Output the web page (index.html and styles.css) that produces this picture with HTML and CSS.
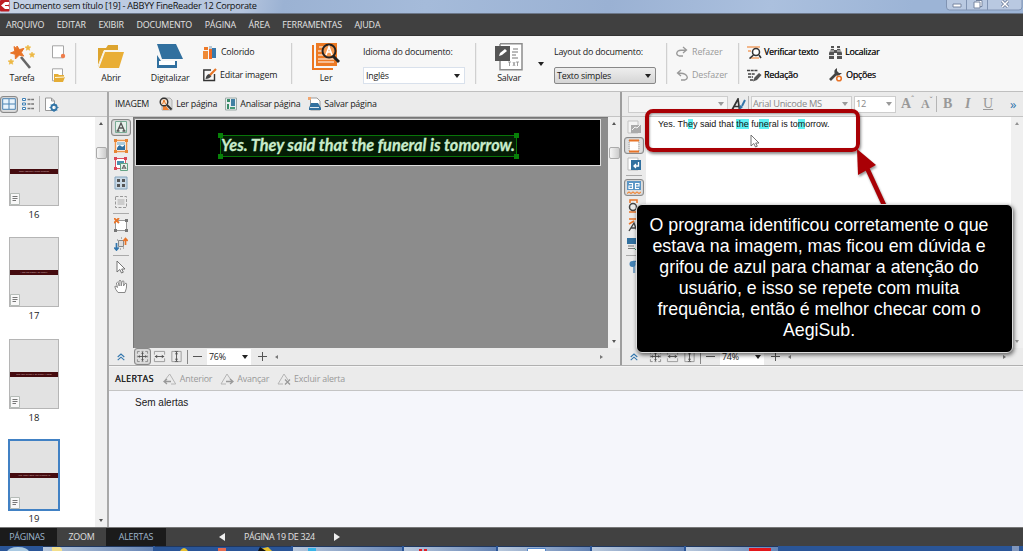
FILE: index.html
```html
<!DOCTYPE html>
<html lang="pt">
<head>
<meta charset="utf-8">
<title>ABBYY FineReader 12 Corporate</title>
<link rel="stylesheet" href="styles.css">
</head>
<body>
<svg class="defs" width="0" height="0">
  <symbol id="pageglass" viewBox="0 0 14 14"><path d="M3 1h8l2 2v10H3z" fill="#ddd" stroke="#999" stroke-width=".7"/><path d="M4 9h3l3 4H4z" fill="#f08030"/><circle cx="5" cy="5" r="3.8" fill="#f7e2cf" stroke="#333" stroke-width="1.4"/><path d="M3.6 7 5 3l1.5 4" stroke="#e87722" fill="none"/><path d="m8 8 4.500 4.500" stroke="#333" stroke-width="2"/></symbol>
  <symbol id="a-tri" viewBox="0 0 14 12"><path d="M2 7 6.700 1l6 10H8" fill="none" stroke="#b5b5b5"/></symbol>
  <symbol id="dbl" viewBox="0 0 8 8"><path d="m.7 4 3.300-3 3.300 3m-6.600 3.200L4 4.200l3.300 3" fill="none" stroke="#3276ad" stroke-width="1.100"/></symbol>
  <symbol id="fit" viewBox="0 0 14 14"><path d="M1.500 4V1.500H4m2 0h2m2 0h2.500V4m0 2v2m0 2v2.500H10m-2 0H6m-2 0H1.500V10m0-2V6" fill="none" stroke="#888"/><path d="M7 3v8M3 7h8" stroke="#555"/><path d="m5.500 4 1.500-2 1.500 2zm0 6L7 12l1.500-2zM4 5.500 2 7l2 1.500zm6 0L12 7l-2 1.500z" fill="#555"/></symbol>
  <symbol id="fitw" viewBox="0 0 14 14"><path d="M1.500 5V1.500h11V5m0 4v3.500h-11V9" fill="none" stroke="#999"/><path d="M2 7h10" stroke="#555"/><path d="M4.500 5 2 7l2.500 2zm5 0L12 7 9.500 9z" fill="#555"/></symbol>
  <symbol id="fith" viewBox="0 0 14 14"><path d="M5 1.500H2v11h3m4-11h3v11H9" fill="none" stroke="#999"/><path d="M7 2v10M5 1.500h4m-4 11h4" stroke="#555"/><path d="M5.400 4.500 7 2l1.600 2.500zm0 5L7 12l1.600-2.500z" fill="#555"/></symbol>
  <symbol id="note" viewBox="0 0 10 12"><path d="M.5.500h9v11h-9z" fill="#f8f8f8" stroke="#b5bbb7"/><path d="M2.500 3.500h5m-5 2h5m-5 2H6" stroke="#777"/></symbol>
  <symbol id="cursor" viewBox="0 0 10 14"><path d="M1 1v11l2.800-2.500L5.500 13l1.800-.8L5.700 9H9z" fill="#fff" stroke="#666" stroke-width=".9"/></symbol>
</svg>

<header class="title"><svg width="10" height="12" viewBox="0 0 10 12"><rect width="9.500" height="11.500" rx="1" fill="#bd1d23"/><path d="M9 2H5L1 5.500 5 9h4V6.500L6.500 5.500 9 4.500z" fill="#fff"/><path d="M5 5.500h4" stroke="#bd1d23"/></svg><span>Documento sem título [19] - ABBYY FineReader 12 Corporate</span>
  <svg class="winbtns" width="79" height="12" viewBox="0 0 79 12"><path d="M.5 0v7q0 3 3 3H73q3 0 3-3V0M20.500 0v10M41.500 0v10" fill="#b9c9e1" stroke="#8093b2"/><path d="M7 4h8v3H7zM28 2h6v6h-6zM30 .5h6v6h-2" fill="#fff" stroke="#7685a0"/><path d="m56 1 6 6m0-6-6 6" stroke="#687894" stroke-width="3"/><path d="m56 1 6 6m0-6-6 6" stroke="#fff" stroke-width="1.500"/></svg>
</header>
<nav class="menu"><span>ARQUIVO</span><span>EDITAR</span><span>EXIBIR</span><span>DOCUMENTO</span><span>PÁGINA</span><span>ÁREA</span><span>FERRAMENTAS</span><span>AJUDA</span></nav>

<section class="toolbar">
  <div class="big"><svg width="28" height="28" viewBox="0 0 28 28"><path d="m13 14 9 11" stroke="#666" stroke-width="2.600"/><path d="m9 3 2.400 3.600 4.500-1.200-2.600 4 2.400 3.700-4.400-1L7.400 16l-.2-4.700L2.500 10l4.300-1.700L6 3.500l2.500 2z" fill="#e87428" stroke="#e87428"/><path d="m20 2 .8 1.700 2 .2-1.500 1.400.4 2-1.700-1-1.700 1 .4-2L17 4l2-.2zM24 9l.9 1.700 2 .2-1.500 1.400.4 2-1.800-1-1.700 1 .4-2-1.500-1.400 2-.2zM3 16l.9 1.700 2 .2-1.500 1.400.4 2-1.800-1-1.700 1 .4-2L0 17.900l2-.2z" fill="#edb843" stroke="#edb843" stroke-width=".6"/></svg><span>Tarefa</span></div>
  <div class="icons2"><svg width="15" height="15" viewBox="0 0 15 15"><path d="M1.500.8h11v12h-11z" fill="#fff" stroke="#a5a5a5"/><circle cx="12" cy="11" r="2.200" fill="#ef7d4b"/></svg><svg width="15" height="15" viewBox="0 0 15 15"><path d="M1.500.8h10v12h-10z" fill="#fff" stroke="#a5a5a5"/><path d="M3 14V6h4l1 1h5v2h1l-2 5z" fill="#e5ad35"/><path d="m4 9.500 9.500-.5" stroke="#fff8df"/></svg></div>
  <i class="sep"></i>
  <div class="big abrir"><svg width="28" height="28" viewBox="0 0 28 28"><path d="M1 24V5h8l2-3h10v5H7z" fill="#dda42e"/><path d="M8 9h19l-5 16H2z" fill="#e9ae35"/><path d="M1 23 7 8h15V4" fill="none" stroke="#faf2dc"/></svg><span>Abrir</span></div>
  <div class="big digi"><svg width="28" height="28" viewBox="0 0 28 28"><path d="M1 1h19l7 15H6z" fill="#31709f"/><path d="M1 12v13h20v-7H5z" fill="#31709f"/><path d="M3 18h16v4H3z" fill="#fff"/></svg><span>Digitalizar</span></div>
  <div class="pair colors"><p><svg width="13" height="13" viewBox="0 0 13 13"><path d="M1 1h4v3H1z" fill="#ee7a28"/><path d="M0 5h5v8H0z" fill="#ef8935"/><path d="M6 3h3v10H6z" fill="#f06a25"/><path d="M9 2h4v10H9z" fill="#3879ac"/><path d="M6 0h3v3H6z" fill="#b6c8d6"/></svg>Colorido</p><p><svg width="14" height="14" viewBox="0 0 14 14"><path d="M11.500 6v6.500h-10.700V2H8" fill="none" stroke="#333" stroke-width="1.400"/><path d="M2.500 11q1-5 4-5l2 2q-2 3-6 3" fill="#444"/><path d="m7 7 6-6" stroke="#e87527" stroke-width="2.200"/></svg>Editar imagem</p></div>
  <i class="sep"></i>
  <div class="big ler"><svg width="28" height="28" viewBox="0 0 28 28"><path d="M1 2v24h20" fill="none" stroke="#ec7620" stroke-width="2"/><path d="M4 0h21v23H4z" fill="#ed7a24"/><path d="M7 4h7M6 8h6m-6 4h6m-6 4h16M6 19h16" stroke="#fff" stroke-width="1.200"/><circle cx="17" cy="8" r="6.500" fill="#f4984f" stroke="#222" stroke-width="2"/><path d="m14 12 3-8 3 8m-5-3h4" stroke="#fff" stroke-width="1.600" fill="none"/><path d="m21 13 6 6" stroke="#222" stroke-width="3"/></svg><span>Ler</span></div>
  <div class="choice idioma"><label>Idioma do documento:</label><b class="select">Inglês<i class="tri"></i></b></div>
  <i class="sep"></i>
  <div class="big salvar"><svg width="28" height="28" viewBox="0 0 28 28"><path d="M5 .8h22v26H5V18m0-15V1" fill="#fff" stroke="#8d8d8d" stroke-width="1.500"/><path d="M0 3h15v15H0z" fill="#555"/><path d="m4 13 1-3 5-4 2 2-5 4z" fill="#fff"/><path d="M18 6h5m-6 3h6m-6 3h4m-4 3h6" stroke="#777"/><path d="M13 19h3m-1.500 0v4m3.500-4 2 4m0-4-2 4m3-4h3m-1.500 0v4" stroke="#888" stroke-width=".8"/></svg><span>Salvar</span></div>
  <i class="tri loose"></i>
  <div class="choice layout"><label>Layout do documento:</label><b class="select gray">Texto simples<i class="tri"></i></b></div>
  <i class="sep"></i>
  <div class="pair undo"><p><svg width="12" height="12" viewBox="0 0 12 12"><path d="M3 10Q-1 8 2 5q2-1 8-1M7 1l3.500 3L7 7M3 10h4" fill="none" stroke="#999" stroke-width="1.300"/></svg>Refazer</p><p><svg width="12" height="12" viewBox="0 0 12 12"><path d="M9 11q4-2 1-5-2-2-8-2m3-3L1.500 4 5 7m4 4H5" fill="none" stroke="#999" stroke-width="1.300"/></svg>Desfazer</p></div>
  <i class="sep"></i>
  <div class="pair check"><p><svg width="15" height="13" viewBox="0 0 15 13"><path d="M0 1h13M1 5h3m-1 7h9" stroke="#f2a268" stroke-width="1.400"/><circle cx="9" cy="6" r="3.500" fill="#fff" stroke="#333" stroke-width="1.500"/><path d="m6.500 9-4 3.500M12 9l2 3" stroke="#333" stroke-width="1.600"/></svg>Verificar texto</p><p><svg width="15" height="13" viewBox="0 0 15 13"><path d="M0 1.500h11M1 5h7M1 8h5m-3 3h4" stroke="#444" stroke-width="1.500" stroke-dasharray="3 .7"/><path d="m6 12.500 1.500-4L12 4l2.500 2L10 11z" fill="#555"/></svg>Redação</p></div>
  <div class="pair find"><p><svg width="13" height="13" viewBox="0 0 13 13"><path d="M2 0h3v4h3V0h3v3l2 4v6H8V7H5v6H0V7l2-4z" fill="#555"/><path d="M0 9.500h5m3 0h5M2 2.500h3m3 0h3M1 5h4m3 0h4" stroke="#f6f6f6" stroke-width=".9"/></svg>Localizar</p><p><svg width="14" height="14" viewBox="0 0 14 14"><path d="m1 12 6-6" stroke="#444" stroke-width="2.600"/><path d="M8 0Q4 2 6 6t7-1l-3 0-2-2z" fill="#444"/><circle cx="10" cy="10.500" r="2.300" fill="#fff" stroke="#e87428" stroke-width="1.600"/></svg>Opções</p></div>
</section>

<main>
  <aside class="pages">
    <div class="bar"><span class="on"><svg width="14" height="12" viewBox="0 0 14 12"><path d="M.7.700h12.600v10.600H.7zM7 1v10M1 6h12" fill="#eaf4fc" stroke="#4a83b3"/></svg></span><svg width="13" height="12" viewBox="0 0 13 12"><path d="M.5.500h3v2h-3zm0 4.500h3v2h-3zm0 4.500h3v2h-3z" fill="#fff" stroke="#3f80b5"/><path d="M5.500 1.500H12M5.500 6H12m-6.500 4.500H12" stroke="#777" stroke-dasharray="3 .7" stroke-width="1.500"/></svg><i class="vline"></i><svg width="15" height="15" viewBox="0 0 15 15"><path d="M9.500 13.500h-8V1h6l3 3v3M7.500 1v3h3" fill="#fff" stroke="#999"/><circle cx="10" cy="10.500" r="2.700" fill="none" stroke="#3275a7" stroke-width="1.900"/><path d="M10 6v9M5.500 10.500h9M7 7.500l6 6m0-6-6 6" stroke="#3275a7" stroke-dasharray="1.300 6.400"/></svg></div>
    <div class="pagebody">
      <div class="list">
        <figure><div class="thumb"><s>They weren't even human</s><svg width="10" height="12"><use href="#note"/></svg></div><figcaption>16</figcaption></figure>
        <figure><div class="thumb"><s>I am so happy to finally</s><svg width="10" height="12"><use href="#note"/></svg></div><figcaption>17</figcaption></figure>
        <figure><div class="thumb"><s>Did you bring it or didn't I hear</s><svg width="10" height="12"><use href="#note"/></svg></div><figcaption>18</figcaption></figure>
        <figure><div class="thumb sel"><s>Yes. They said the funeral is</s><svg width="10" height="12"><use href="#note"/></svg></div><figcaption>19</figcaption></figure>
      </div>
      <div class="vscroll"><i class="up"></i><i class="grip"></i><i class="down"></i></div>
    </div>
  </aside>

  <div class="work">
    <div class="panes">
      <section class="image">
        <div class="bar cmds"><span>IMAGEM</span><svg width="14" height="14"><use href="#pageglass"/></svg><span>Ler página</span><svg width="12" height="14" viewBox="0 0 12 14"><path d="M.5 1h11v12H.5z" fill="#e9eef0" stroke="#9caaa7"/><path d="M2 2h3v3H2zM2 7h2v5H2z" fill="#398d68"/><path d="M6 2h4v7H6z" fill="#4180a3"/><path d="M5 10h5v2H5z" fill="#4a9b7a"/></svg><span>Analisar página</span><svg width="13" height="14" viewBox="0 0 13 14"><path d="M2.500 1H9l3 3v9H2.500z" fill="#fff" stroke="#999"/><path d="m3 6h7l3 5v2H1v-2z" fill="#31709f"/><path d="M0 0h3v3H0z" fill="#f2a56e"/><path d="M2 10.500h9" stroke="#dce8f0"/></svg><span>Salvar página</span></div>
        <div class="viewer">
          <div class="strip">
            <span class="on"><svg width="14" height="14" viewBox="0 0 14 14"><path d="M1.500 1.500h11v11h-11z" fill="#e5f0ea" stroke="#78ab94"/><path d="M3.500 11 7 3l3.500 8M5 8h4M2.500 11h3m3 0h3" fill="none" stroke="#555" stroke-width="1.300"/></svg></span>
            <svg width="14" height="14" viewBox="0 0 14 14"><path d="M1.500 1.500h11v11h-11z" fill="#fff" stroke="#ee954c" stroke-width="1.500"/><path d="M3 9q2-4 4-2t4-2v6H3z" fill="#31709f"/><path d="M3 3h8v3H3z" fill="#a9cadb"/><path d="M0 0h3v3H0zm11 0h3v3h-3zM0 11h3v3H0zm11 0h3v3h-3z" fill="#e68434"/></svg>
            <svg width="14" height="14" viewBox="0 0 14 14"><path d="M1.500 1.500h10v10h-10z" fill="#fff" stroke="#dd5163"/><path d="M3 4h7v4H3z" fill="#4b91ad"/><path d="M0 0h3v3H0zm10 0h3v3h-3zM0 10h3v3H0z" fill="#d94555"/><path d="M6.500 6.500h7v7h-7z" fill="#e6f1eb" stroke="#64a485"/><path d="m8 12 2-4 2 4m-3-1h2" stroke="#555" fill="none"/></svg>
            <svg width="14" height="14" viewBox="0 0 14 14"><path d="M1 1h12v12H1z" fill="#c9d9e6" stroke="#82a3bd"/><path d="M3 3h3v3H3zm5 0h3v3H8zM3 8h3v3H3zm5 0h3v3H8z" fill="#555"/></svg>
            <svg width="14" height="14" viewBox="0 0 14 14"><path d="M1.500 1.500h11v11h-11z" fill="none" stroke="#999" stroke-dasharray="3 1.500"/><path d="M3.500 4h7v6h-7z" fill="#ccc"/></svg>
            <hr>
            <svg width="14" height="14" viewBox="0 0 14 14"><path d="M1.500 2.500h11v10h-11z" fill="#fff" stroke="#999"/><path d="M11 1h3v3h-3zM0 11h3v3H0zm11 0h3v3h-3z" fill="#777"/><path d="m0 0 5 5m0-5L0 5" stroke="#e87428" stroke-width="1.800"/></svg>
            <svg width="14" height="14" viewBox="0 0 14 14"><path d="M4.500 3.500h5v6h-5z" fill="#ddd" stroke="#888"/><path d="M2.500 6v7M.3 10.500l2.200 2.500 2.200-2.500" fill="none" stroke="#3276ad" stroke-width="1.700"/><path d="M11.500 8V1.500M9.300 4l2.200-2.500L13.700 4" fill="none" stroke="#e87428" stroke-width="1.700"/><path d="M6 12h1m2-1h1M3 3h1m3-2h1" stroke="#777"/></svg>
            <hr>
            <svg width="10" height="14"><use href="#cursor"/></svg>
            <svg width="14" height="15" viewBox="0 0 14 15"><path d="M4 13.500Q1 10 .8 7.500q1-1 2.700 1L2.400 4q1-1.500 2 0l.8 3L5 2q1-1.500 2 0l.2 5L8 2.500q1-1.300 2 0L9.500 7 11 4.500q1.500-.8 1.600.5Q13 9 11 13.500z" fill="#fff" stroke="#888"/></svg>
          </div>
          <div class="canvas"><div class="sheet"><svg width="301" height="26" viewBox="0 0 301 26"><path d="M2.500 2.500h296v21h-296z" fill="#041c05" stroke="#087509"/><path d="M0 0h5v5H0zm296 0h5v5h-5zM0 21h5v5H0zm296 0h5v5h-5z" fill="#078108"/><text x="3" y="18" class="scan" textLength="294" lengthAdjust="spacingAndGlyphs">Yes. They said that the funeral is tomorrow.</text></svg></div></div>
          <div class="vscroll"><i class="up"></i><i class="grip"></i><i class="down"></i></div>
        </div>
        <div class="zoom"><svg width="8" height="8"><use href="#dbl"/></svg><span class="on"><svg width="13" height="13"><use href="#fit"/></svg></span><svg width="13" height="13"><use href="#fitw"/></svg><svg width="13" height="13"><use href="#fith"/></svg><i class="vline"></i><i class="minus"></i><b>76%<i class="tri"></i></b><i class="plus"></i><em class="lt"></em><em class="gt"></em></div>
      </section>

      <section class="text">
        <div class="bar fmt"><b class="box w1"><i class="tri"></i></b><svg width="15" height="13" viewBox="0 0 15 13"><path d="m1 12 6-11 1.500 11M3.500 8.500h5" stroke="#333" stroke-width="1.700" fill="none"/><path d="m11 8 3-6" stroke="#3275a8" stroke-width="2"/><path d="m9 7 3 2-4 3.500z" fill="#3275a8"/></svg><i class="vline"></i><b class="box w2">Arial Unicode MS<i class="tri"></i></b><b class="box w3">12<i class="tri"></i></b><span class="sf a1">A<sup>ˆ</sup></span><span class="sf a2">A<sup>ˇ</sup></span><i class="vline"></i><span class="sf bb">B</span><span class="sf ii">I</span><span class="sf uu">U</span><span class="more">»</span></div>
        <div class="viewer">
          <div class="strip rstrip">
            <svg width="14" height="14" viewBox="0 0 14 14"><path d="M1 1h10v12H1z" fill="#f4f4f4" stroke="#c3c3c3"/><path d="M4 5h10v8H4z" fill="#aaa"/><path d="m5 10 3-3 2 1 3-3" stroke="#f4f4f4" fill="none"/></svg>
            <span class="on"><svg width="12" height="14" viewBox="0 0 12 14"><path d="M1 1v12M11 1v12" stroke="#aaa" stroke-dasharray="1 1"/><path d="M2 2h8v10H2z" fill="#fff"/><path d="M1 1.500h10M1 12.500h10" stroke="#e87428" stroke-width="2"/></svg></span>
            <svg width="14" height="14" viewBox="0 0 14 14"><path d="M1 1h10v12H1z" fill="#fff" stroke="#bbb"/><path d="M4 3h10v10H4z" fill="#31709f"/><path d="M11.500 5v4H7m2-2L7 9l2 2" stroke="#fff" fill="none" stroke-width="1.300"/></svg>
            <hr>
            <span class="on"><svg width="14" height="14" viewBox="0 0 14 14"><path d="M0 0h14v9H0z" fill="#5b96c6"/><path d="M2 2.500h3.500v5H2V5h3.500M12 7.500H8.500v-5H12V5H8.500" stroke="#fff" fill="none" stroke-width="1.100"/><path d="m0 12.500 2-1.500 2 1.500L6 11l2 1.500 2-1.500 2 1.500 2-1.500" stroke="#ef8d42" fill="none" stroke-width="1.200"/></svg></span>
            <svg width="14" height="14" viewBox="0 0 14 14"><path d="M3 4V1h7v3M2 13h8" stroke="#e87428" fill="none" stroke-width="1.500"/><circle cx="6" cy="8" r="3.500" fill="none" stroke="#444" stroke-width="1.500"/></svg>
            <svg width="14" height="14" viewBox="0 0 14 14"><path d="M2 1h8v5M2 6l5-3" stroke="#e87428" fill="none" stroke-width="1.500"/><path d="m2 13 5-8 3 8M4 10h7" stroke="#444" fill="none" stroke-width="1.400"/></svg>
            <svg width="14" height="14" viewBox="0 0 14 14"><path d="M0 1h14v6H0z" fill="#31709f"/><path d="M1 9h6M1 11.500h6" stroke="#777"/><path d="m7 11 2 2 4-5" stroke="#398d68" fill="none"/></svg>
            <hr>
            <svg width="14" height="14" viewBox="0 0 14 14"><path d="M6 1.500h5M7 1v12M9.500 1v12" stroke="#4483b5" stroke-width="1.300"/><circle cx="5.500" cy="4" r="3" fill="#4483b5"/></svg>
          </div>
          <div class="doc"><p>Yes. Th<mark>e</mark>y said that <mark>the</mark> fu<mark>ne</mark>ral is to<mark>m</mark>orrow.</p></div>
          <div class="vscroll pale"><i class="up"></i><i class="down"></i></div>
        </div>
        <div class="zoom"><svg width="8" height="8"><use href="#dbl"/></svg><span class="on off"><svg width="13" height="13"><use href="#fit"/></svg></span><svg width="13" height="13"><use href="#fitw"/></svg><svg width="13" height="13"><use href="#fith"/></svg><i class="vline"></i><i class="minus"></i><b>74%<i class="tri"></i></b><i class="plus"></i><em class="lt"></em><em class="gt"></em></div>
      </section>
    </div>
    <section class="alerts">
      <div class="bar"><span class="cap">ALERTAS</span>
        <svg width="14" height="12"><use href="#a-tri"/><path d="M1 8.500h7M4 6 1 8.500 4 11" stroke="#999" fill="none" stroke-width="1.300"/></svg><span>Anterior</span>
        <svg width="14" height="12" viewBox="0 0 14 12"><path d="M6 11H1l6-10 4 6" fill="none" stroke="#b5b5b5"/><path d="M6 8.500h7M10 6l3 2.500-3 2.500" stroke="#999" fill="none" stroke-width="1.300"/></svg><span>Avançar</span>
        <svg width="14" height="12" viewBox="0 0 14 12"><path d="M6 11H1l6-10 4 6" fill="none" stroke="#b5b5b5"/><path d="m8 6.500 5 5m0-5-5 5" stroke="#999" stroke-width="1.300"/></svg><span>Excluir alerta</span></div>
      <div class="none">Sem alertas</div>
    </section>
  </div>
</main>

<footer class="status"><span class="dark st1">PÁGINAS</span><span class="st2">ZOOM</span><span class="dark st3">ALERTAS</span><i class="prev"></i><span class="pg">PÁGINA 19 DE 324</span><i class="next"></i></footer>
<div class="taskbar"><div class="tasks"><i></i><i></i><i></i><i></i><i></i><i></i><i></i></div>
  <svg width="1023" height="5" viewBox="0 0 1023 5"><ellipse cx="18" cy="6" rx="11" ry="5" fill="#a9c9e2"/><path d="M52 1h8l2 2v2H52z" fill="#f3df8b"/><path d="M180 5q4-6 8 0M260 3l8-2 4 4h-12z" fill="#e6bf2c"/><path d="M260 1l6 4h-8z" fill="#111"/><path d="M218 2h8v3h-8z" fill="#e46a50"/><path d="M308 2h8v3h-8z" fill="#36b4e8"/><path d="M419 3h3v2h-3zm5 0h3v2h-3z" fill="#e01e25"/><path d="M527.500 2.500h18v4h-18z" fill="#fff" stroke="#5689cc"/><path d="M749 2h22v3h-22z" fill="#e3161b"/><path d="M1012 0h7v5h-7z" fill="#7f96bd"/></svg></div>

<div class="redbox"></div>
<svg class="pointer" width="40" height="60" viewBox="0 0 40 60"><path d="m14 22 17 37" stroke="#a90005" stroke-width="4.500"/><path d="m4 3 19 16-18 10z" fill="#a90005"/></svg>
<svg class="mouse" width="10" height="14"><use href="#cursor"/></svg>
<div class="callout">O programa identificou corretamente o que<br>estava na imagem, mas ficou em dúvida e<br>grifou de azul para chamar a atenção do<br>usuário, e isso se repete com muita<br>frequência, então é melhor checar com o<br>AegiSub.</div>
</body>
</html>
```
FILE: styles.css
```css
* { box-sizing: border-box; }
body { margin: 0; width: 1023px; height: 551px; overflow: hidden; display: flex; flex-direction: column; font: 8.9px/12px "Open Sans", "Noto Sans", sans-serif; letter-spacing: -0.22px; color: #1a1a1a; background: #ebebeb; white-space: nowrap; }
p, figure, hr { margin: 0; }
i, em, s { font-style: normal; text-decoration: none; }
b { font-weight: 400; }
svg { flex: none; display: block; }
.defs { position: absolute; }

.title { height: 14px; flex: none; display: flex; align-items: flex-start; gap: 3px; background: linear-gradient(100deg, #c6d2e4 0, #b5c5de 240px, #9bb2d3 280px, #a5bbda 420px, #9ab1d3 600px, #abc0de 760px, #9cb4d6 900px); border-bottom: 1px solid #6c7789; font-size: 9.200px; color: #111; letter-spacing: -0.28px; }
.winbtns { margin-left: auto; margin-right: -2px; }
.menu { height: 22px; flex: none; display: flex; align-items: center; gap: 12.500px; padding: 0 6px; background: #404040; border-bottom: 1px solid #333; color: #e4e4e4; letter-spacing: -0.12px; }
.toolbar { height: 55px; flex: none; display: flex; background: #f7f7f7; padding-top: 7px; }
.sep { width: 2px; height: 41px; background: #d0d0d0; border-right: 1px solid #eee; flex: none; }
.big { display: flex; flex-direction: column; align-items: center; gap: 1px; width: 44px; flex: none; }
.big span { line-height: 12px; }
.icons2 { width: 31px; padding: 2px 0 0 7px; display: flex; flex-direction: column; gap: 8px; }
.abrir { margin-left: 12px; } .digi { width: 50px; margin-left: 12px; }
.pair { display: flex; flex-direction: column; gap: 9px; padding-top: 2px; flex: none; }
.pair p { display: flex; gap: 4px; align-items: center; height: 14px; }
.colors { width: 96px; padding-left: 8px; }
.colors p:first-child { gap: 5px; }
.colors p { gap: 3px; }
.ler { width: 50px; margin-left: 8px; }
.choice { width: 102px; margin-left: 12px; padding-top: 3px; display: flex; flex-direction: column; gap: 9px; }
.select { height: 17px; display: flex; align-items: center; justify-content: space-between; padding: 0 4px 0 2px; background: #fff; border: 1px solid #d9e1ec; }
.select.gray { background: linear-gradient(#eee, #d5d5d5); border-color: #888; border-radius: 2px; }
.tri { width: 0; height: 0; border: 3px solid transparent; border-top: 4px solid #222; border-bottom: 0; flex: none; }
.idioma { margin-right: 10px; }
.salvar { margin-left: 10px; }
.loose { margin: 19px 10px 0 7px; }
.layout { margin: 0 10px 0 0; }
.undo { width: 70px; padding-left: 8px; color: #999; letter-spacing: -0.1px; }
.check { width: 89px; padding-left: 7px; }
.pair.check p { gap: 2px; }
.pair.check, .pair.find { color: #151515; text-shadow: .2px 0 #333; }
.pair.find p { gap: 3px; }

main { height: 436px; flex: none; display: flex; border-top: 1px solid #bfbfbf; }
.bar { height: 25px; flex: none; display: flex; align-items: center; background: #ebebeb; border-bottom: 1px solid #c4c4c4; }
.pages { width: 109px; border-right: 2px solid #a8a8a8; display: flex; flex-direction: column; background: #fff; flex: none; }
.pages .bar { gap: 4px; }
.on { border: 1px solid #8a8a8a; border-radius: 3px; background: #dedede; display: flex; align-items: center; justify-content: center; width: 18px; height: 17px; box-shadow: inset 0 0 1px #777; flex: none; }
.vline { width: 1px; height: 16px; background: #b5b5b5; flex: none; }
.pagebody { flex: 1; display: flex; overflow: hidden; }
.list { width: 96px; padding: 19px 0 0 9px; display: flex; flex-direction: column; gap: 13.400px; }
figure { width: 50px; height: 88px; flex: none; text-align: center; font-size: 9.5px; letter-spacing: 0; }
.thumb { height: 70px; background: #e2e2e2; border: 1px solid #b5b5b5; display: flex; flex-direction: column; justify-content: space-between; padding-top: 32px; margin-bottom: 3px; }
.thumb s { height: 5px; background: #450b0f; color: #d4b4b6; font-size: 2.500px; line-height: 5px; letter-spacing: 0; }
.thumb.sel { outline: 2px solid #4181c4; outline-offset: -1px; border-color: #4181c4; }
.vscroll { width: 12px; background: #f0f0f0; display: flex; flex-direction: column; align-items: center; padding: 5px 0; flex: none; }
.up, .down { border: 2.500px solid transparent; border-top: 0; border-bottom: 3px solid #555; }
.down { border-bottom: 0; border-top: 3px solid #555; margin-top: auto; }
.grip { width: 11px; height: 12px; margin-top: 22px; border: 1px solid #aaa; border-radius: 2px; background: linear-gradient(90deg, #f5f5f5, #ccc); }
.work { flex: 1; display: flex; flex-direction: column; min-width: 0; }
.panes { display: flex; height: 274px; border-bottom: 1px solid #b0b0b0; }
.image { width: 513px; border-right: 2px solid #9d9d9d; display: flex; flex-direction: column; }
.cmds { padding-left: 6px; gap: 3px; }
.cmds span + svg { margin-left: 5px; }
.cmds span:first-child + svg { margin-left: 7px; }
.viewer { height: 231px; display: flex; }
.strip { width: 24px; display: flex; flex-direction: column; align-items: center; gap: 4.700px; padding: 3px 1px 0 0; flex: none; overflow: hidden; }
.strip hr { width: 16px; height: 1px; border: 0; background: #aaa; flex: none; margin: -.6px 0; }
.strip .on { height: 17px; width: 20px; margin: -1.500px 0; }
.canvas { flex: 1; background: #8c8c8c; padding: 1px 7px 0 1px; border-top: 1px solid #777; border-left: 1px solid #777; }
.sheet { height: 47px; background: #000; border: 1px solid #ddd; padding: 12.500px 0 0 82px; }
.sheet svg { overflow: visible; }
.scan { font: italic 700 17.500px Lato, sans-serif; letter-spacing: 0; fill: #c9eccb; stroke: #c9eccb; stroke-width: .3px; }
.zoom { height: 17px; display: flex; align-items: center; padding-left: 8px; gap: 2px; background: #ebebeb; }
.zoom .on { margin-left: 7px; width: 17px; height: 17px; }
.zoom svg + svg { margin-left: 2px; }
.zoom .vline { height: 14px; margin: 0 3px 0 2px; background: #888; }
.zoom b { width: 44px; height: 16px; background: #fff; display: flex; justify-content: space-between; align-items: center; padding: 0 3px 0 2px; margin-left: 3px; }
.minus, .plus { width: 9px; height: 9px; background: linear-gradient(#555, #555) center / 9px 1px no-repeat; }
.plus { margin-left: 5px; background: linear-gradient(#555, #555) center / 9px 1px no-repeat, linear-gradient(#555, #555) center / 1px 9px no-repeat; }
.lt, .gt { width: 0; height: 0; border: 2.500px solid transparent; border-right: 3px solid #777; border-left: 0; margin-left: 6px; }
.gt { border-left: 3px solid #777; border-right: 0; margin: 0 17px 0 auto; }

.text { flex: 1; display: flex; flex-direction: column; min-width: 0; }
.fmt { color: #888; padding-left: 6px; }
.fmt > * { flex: none; }
.fmt > svg { margin: 0 2px 0 3px; }
.box { height: 17px; background: #f5f5f5; border: 1px solid #cdcdcd; display: flex; align-items: center; justify-content: space-between; padding: 0 3px; font-size: 9.3px; }
.box .tri { border-top-color: #999; margin-left: auto; }
.w1 { width: 100px; } .w2 { width: 101px; margin-left: 2px; padding-left: 1px; letter-spacing: -0.3px; } .w3 { width: 42px; background: #fff; margin-left: 2px; padding-left: 1px; }
.sf { font: 700 14px/16px "Liberation Serif", serif; color: #999; width: 20px; letter-spacing: 0; }
.sf sup { font-size: 8px; line-height: 1px; }
.a1 { margin-left: 5px; }
.a2 { font-size: 12px; width: 15px; }
.bb { margin-left: 6px; } .ii { font-style: italic; padding-left: 2px; } .uu { text-decoration: underline; font-weight: 400; }
.more { color: #3276ad; font-size: 13px; margin-left: 7px; line-height: 14px; }
.doc { flex: 1; background: #fff; padding: 1px 0 0 12px; font: 8.97px/12px "Liberation Sans", Arial, sans-serif; letter-spacing: 0; color: #111; }
mark { background: #5ff2f3; color: inherit; }
.pale i { opacity: .6; }
.zoom .off { border-color: transparent; background: none; box-shadow: none; }
.alerts { flex: 1; display: flex; flex-direction: column; background: #f5f6fb; }
.alerts .bar { padding-left: 6px; gap: 3px; color: #999; letter-spacing: -0.2px; border-top: 1px solid #f5f5f5; }
.alerts .bar svg { margin-left: 5px; }
.alerts .cap { color: #222; margin-right: 1px; text-shadow: .2px 0 #222; letter-spacing: .4px; }
.none { padding: 6px 0 0 26px; font: 10px/12px "Liberation Sans", Arial, sans-serif; letter-spacing: 0; }

.status { height: 19px; flex: none; display: flex; align-items: center; background: #414141; border-top: 1px solid #777; color: #e2e2e2; text-align: center; }
.status span { line-height: 18px; }
.dark { background: #1b1b1b; color: #9fb6cc; }
.st1 { width: 57px; padding-right: 3px; } .st2 { width: 49px; } .st3 { width: 60px; }
.prev, .next { border: 4px solid transparent; border-right: 6px solid #eee; border-left: 0; margin-left: 53px; }
.next { border-left: 6px solid #eee; border-right: 0; margin-left: 19px; }
.pg { margin-left: 19px; letter-spacing: -0.32px; }
.taskbar { height: 5px; flex: none; background: #2a5597; position: relative; }
.tasks { display: flex; gap: 2px; height: 5px; padding-left: 43px; }
.tasks i { width: 92px; background: linear-gradient(90deg, #b8c8dc, #6584b5); border-top: 1px solid #203860; }
.tasks i:first-child { width: 110px; } .tasks i:nth-child(2) { width: 136px; background: #2a5597; } .tasks i:nth-child(3) { width: 109px; }
.taskbar svg { position: absolute; left: 0; top: 0; }

.redbox { position: absolute; left: 645px; top: 109px; width: 215px; height: 43px; border: 4px solid #a90005; border-radius: 8px; box-shadow: 1px 2px 3px #0007, inset 1px 1px 2px #0005; }
.pointer { position: absolute; left: 853px; top: 146px; filter: drop-shadow(1px 2px 1px #0006); }
.mouse { position: absolute; left: 750px; top: 134px; }
.callout { position: absolute; left: 636px; top: 204px; width: 377px; height: 149px; border: 1.500px solid #ddd; border-radius: 6px; background: #000; color: #fff; font: 17.8px/21px "Liberation Sans", Arial, sans-serif; letter-spacing: 0; text-align: center; padding: 10px 11px 0 0; box-shadow: 1px 2px 4px #0009; }
```
